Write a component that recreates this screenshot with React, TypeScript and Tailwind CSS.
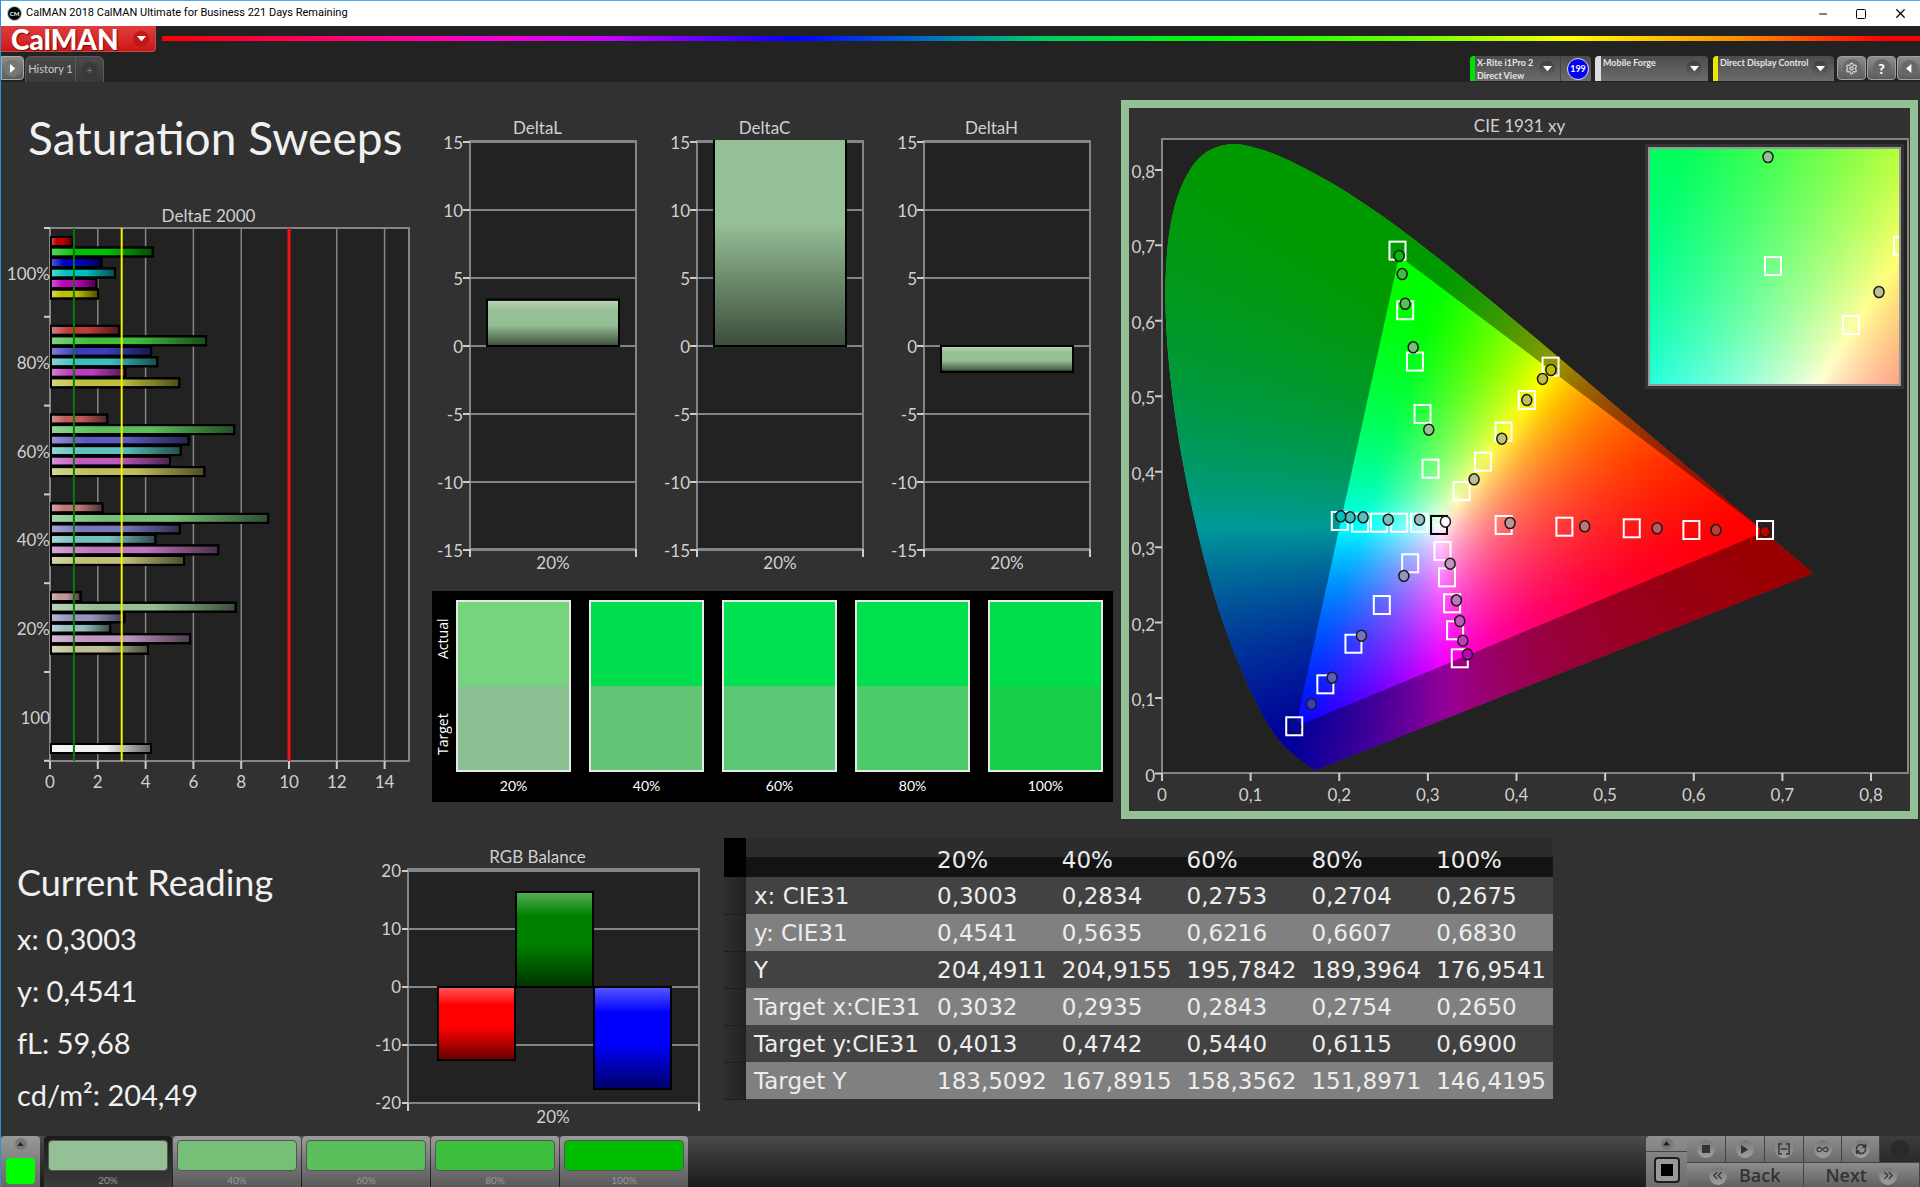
import { ReactNode } from "react";
import { Minus, Square, X, Settings, RefreshCw, Infinity as InfinityIcon, ChevronsLeft, ChevronsRight } from "lucide-react";

const LEVELS = ["20%", "40%", "60%", "80%", "100%"];
const PATCHES = ["#95bf95", "#76bf76", "#5abf5a", "#3cbf3c", "#00bf00"];

const COLORS: Record<string, string[]> = {
  red: ["#bf9595", "#bf7676", "#bf5a5a", "#bf3c3c", "#bf0000"],
  green: PATCHES,
  blue: ["#9595bf", "#7676bf", "#5a5abf", "#3c3cbf", "#0000bf"],
  cyan: ["#95bfbf", "#76bfbf", "#5abfbf", "#3cbfbf", "#00bfbf"],
  magenta: ["#bf95bf", "#bf76bf", "#bf5abf", "#bf3cbf", "#bf00bf"],
  yellow: ["#bfbf95", "#bfbf76", "#bfbf5a", "#bfbf3c", "#bfbf00"],
};
const HUES = ["red", "green", "blue", "cyan", "magenta", "yellow"];

// deltaE per saturation level, in the order of HUES
const deltaE = [
  { label: "100%", level: 4, values: [0.95, 4.3, 2.15, 2.72, 1.94, 2.01] },
  { label: "80%", level: 3, values: [2.9, 6.53, 4.23, 4.49, 3.15, 5.41] },
  { label: "60%", level: 2, values: [2.4, 7.71, 5.8, 5.47, 5.02, 6.46] },
  { label: "40%", level: 1, values: [2.2, 9.13, 5.43, 4.41, 7.04, 5.61] },
  { label: "20%", level: 0, values: [1.28, 7.77, 3.11, 2.52, 5.86, 4.1] },
];

const swatches = [
  { actual: "bg-[#76d47e]", target: "bg-[#8ac092]" },
  { actual: "bg-[#00de4f]", target: "bg-[#63c476]" },
  { actual: "bg-[#00e050]", target: "bg-[#5bc875]" },
  { actual: "bg-[#00e04f]", target: "bg-[#4bcb6c]" },
  { actual: "bg-[#00dc4a]", target: "bg-[#18cd4a]" },
];

const tableRows = [
  ["x: CIE31", "0,3003", "0,2834", "0,2753", "0,2704", "0,2675"],
  ["y: CIE31", "0,4541", "0,5635", "0,6216", "0,6607", "0,6830"],
  ["Y", "204,4911", "204,9155", "195,7842", "189,3964", "176,9541"],
  ["Target x:CIE31", "0,3032", "0,2935", "0,2843", "0,2754", "0,2650"],
  ["Target y:CIE31", "0,4013", "0,4742", "0,5440", "0,6115", "0,6900"],
  ["Target Y", "183,5092", "167,8915", "158,3562", "151,8971", "146,4195"],
];

// spectral locus, 380nm - 700nm
const LOCUS = [
  [0.1741, 0.005], [0.1714, 0.0051], [0.1644, 0.0109],
  [0.1566, 0.0177], [0.144, 0.0297], [0.1355, 0.0399], [0.1241, 0.0578], [0.1096, 0.0868],
  [0.0913, 0.1327], [0.0687, 0.2007], [0.0454, 0.295], [0.0235, 0.4127], [0.0082, 0.5384],
  [0.0039, 0.6548], [0.0139, 0.7502], [0.0389, 0.812], [0.0743, 0.8338], [0.1142, 0.8262],
  [0.1547, 0.8059], [0.1929, 0.7816], [0.2296, 0.7543], [0.2658, 0.7243], [0.3016, 0.6923],
  [0.3373, 0.6589], [0.3731, 0.6245], [0.4087, 0.5896], [0.4441, 0.5547], [0.4788, 0.5202],
  [0.5125, 0.4866], [0.5448, 0.4544], [0.5752, 0.4242], [0.6029, 0.3965], [0.627, 0.3725],
  [0.6658, 0.334], [0.6915, 0.3083], [0.7079, 0.292], [0.7347, 0.2653],
];

const targets = [
  [0.2657, 0.693], [0.2744, 0.614], [0.2854, 0.546], [0.294, 0.4765], [0.303, 0.404],
  [0.4384, 0.5392], [0.4116, 0.495], [0.3853, 0.453], [0.3622, 0.4133], [0.338, 0.3744],
  [0.2006, 0.3347], [0.2235, 0.3324], [0.2447, 0.3324], [0.2676, 0.3324], [0.2902, 0.3324],
  [0.3855, 0.3294], [0.454, 0.3271], [0.53, 0.325], [0.5973, 0.3227], [0.6804, 0.3227],
  [0.3165, 0.2949], [0.3216, 0.26], [0.3273, 0.2256], [0.3307, 0.1898], [0.336, 0.1527],
  [0.28, 0.2786], [0.248, 0.2233], [0.216, 0.172], [0.1843, 0.1182], [0.1492, 0.0626],
];

// measured points, 20% first
const measured: Record<string, number[][]> = {
  green: [[0.301, 0.4557], [0.2834, 0.5648], [0.2744, 0.6226], [0.271, 0.662], [0.2676, 0.6859]],
  yellow: [[0.3521, 0.3899], [0.3834, 0.4437], [0.4116, 0.495], [0.4293, 0.5229], [0.4388, 0.5348]],
  cyan: [[0.2906, 0.3364], [0.2552, 0.3364], [0.2269, 0.3396], [0.2122, 0.3396], [0.2017, 0.3409]],
  red: [[0.3927, 0.332], [0.4769, 0.3276], [0.5586, 0.325], [0.625, 0.3227], [0.6804, 0.3205]],
  magenta: [[0.3251, 0.2781], [0.3322, 0.2296], [0.336, 0.2021], [0.3394, 0.176], [0.3447, 0.158]],
  blue: [[0.2729, 0.2618], [0.225, 0.1826], [0.1919, 0.127], [0.1685, 0.0921], [0.1508, 0.062]],
};

function xyToRgb(x: number, y: number) {
  const X = x / y;
  const Z = (1 - x - y) / y;
  const lin = [
    3.2406 * X - 1.5372 - 0.4986 * Z,
    -0.9689 * X + 1.8758 + 0.0415 * Z,
    0.0557 * X - 0.204 + 1.057 * Z,
  ].map((c) => Math.max(0, c));
  const max = Math.max(...lin);
  const [r, g, b] = lin.map((c) => Math.round((255 * c) / max));
  return `rgb(${r},${g},${b})`;
}

// closed curve through all points, with a straight last edge
function smoothPath(points: number[][]) {
  let d = `M${points[0][0]} ${points[0][1]}`;
  for (let i = 0; i < points.length - 1; i++) {
    const p0 = points[Math.max(0, i - 1)];
    const p1 = points[i];
    const p2 = points[i + 1];
    const p3 = points[Math.min(points.length - 1, i + 2)];
    const c1 = [p1[0] + (p2[0] - p0[0]) / 6, p1[1] + (p2[1] - p0[1]) / 6];
    const c2 = [p2[0] - (p3[0] - p1[0]) / 6, p2[1] - (p3[1] - p1[1]) / 6];
    d += `C${[...c1, ...c2, ...p2].map((n) => n.toFixed(1)).join(" ")}`;
  }
  return d + "Z";
}

interface ColorFieldType {
  id: string;
  left: number;
  top: number;
  width: number;
  height: number;
  x0: number;
  x1: number;
  y0: number;
  y1: number;
}

// chromaticity background, drawn as thin strips with a horizontal gradient each
function ColorField({ id, left, top, width, height, x0, x1, y0, y1 }: ColorFieldType) {
  const step = 3;
  const count = Math.ceil(height / step);
  const stops = Array.from({ length: 41 }, (_, i) => i / 40);
  return (
    <g shapeRendering="crispEdges">
      {Array.from({ length: count }, (_, i) => {
        const y = y1 - ((i + 0.5) / count) * (y1 - y0);
        return (
          <g key={i}>
            <linearGradient id={`${id}${i}`}>
              {stops.map((s) => (
                <stop key={s} offset={s} stopColor={xyToRgb(x0 + s * (x1 - x0), y)} />
              ))}
            </linearGradient>
            <rect x={left} y={top + i * step} width={width} height={step} fill={`url(#${id}${i})`} />
          </g>
        );
      })}
    </g>
  );
}

function ChartTitle({ children }: { children: ReactNode }) {
  return <h2 className="pt-0.5 text-center text-[17px] leading-[22px] text-[#d0d0d0]">{children}</h2>;
}

function BarShade({ id, vertical }: { id: string; vertical?: boolean }) {
  return (
    <linearGradient id={id} x1="0" y1="0" x2={vertical ? "0" : "1"} y2={vertical ? "1" : "0"}>
      <stop offset="0" stopColor="#fff" stopOpacity="0.35" />
      <stop offset="0.25" stopColor="#fff" stopOpacity="0" />
      <stop offset="0.55" stopColor="#000" stopOpacity="0" />
      <stop offset="1" stopColor="#000" stopOpacity="0.6" />
    </linearGradient>
  );
}

function DeltaEChart() {
  const left = 49;
  const unit = 23.9;
  const band = 88.8;
  return (
    <svg viewBox="0 0 431 574" className="block w-full overflow-visible" fontSize="17" fill="#d0d0d0">
      <defs>
        <BarShade id="shadeH" />
      </defs>
      <rect x={left} y="1" width="359" height="533" fill="#222" />
      {[2, 4, 6, 8, 10, 12, 14].map((v) => (
        <line key={v} x1={left + v * unit} x2={left + v * unit} y1="1" y2="534" stroke="#858585" strokeWidth="1.5" />
      ))}
      <rect x={left} y="1" width="359" height="533" fill="none" stroke="#858585" strokeWidth="2" />
      {[0, 2, 4, 6, 8, 10, 12, 14].map((v) => (
        <g key={v}>
          <line x1={left + v * unit} x2={left + v * unit} y1="534" y2="542" stroke="#ccc" strokeWidth="2" />
          <text x={left + v * unit} y="561" textAnchor="middle">{v}</text>
        </g>
      ))}
      {[0, 1, 2, 3, 4, 5, 6].map((i) => (
        <line key={i} x1="43" x2={left} y1={1 + i * band} y2={1 + i * band} stroke="#ccc" strokeWidth="2" />
      ))}
      {deltaE.map((group, g) => (
        <g key={group.label}>
          <text x="49" y={53 + g * band} textAnchor="end">{group.label}</text>
          {group.values.map((v, i) => {
            const box = { x: left + 1, y: 10 + g * band + i * 10.5, width: v * unit - 1, height: 9 };
            return (
              <g key={i} stroke="#000" strokeWidth="2">
                <rect {...box} fill={COLORS[HUES[i]][group.level]} />
                <rect {...box} fill="url(#shadeH)" />
              </g>
            );
          })}
        </g>
      ))}
      <text x="49" y={53 + 5 * band} textAnchor="end">100</text>
      <g stroke="#000" strokeWidth="2">
        <rect x={left + 1} y="517" width="100" height="9" fill="#f2f2f2" />
        <rect x={left + 1} y="517" width="100" height="9" fill="url(#shadeH)" />
      </g>
      <line x1={left + unit} x2={left + unit} y1="1" y2="534" stroke="#0a7a0a" strokeWidth="2" />
      <line x1={left + 3 * unit} x2={left + 3 * unit} y1="1" y2="534" stroke="#f0f000" strokeWidth="2" />
      <line x1={left + 10 * unit} x2={left + 10 * unit} y1="1" y2="534" stroke="#f01414" strokeWidth="3" />
    </svg>
  );
}

function DeltaChart({ title, value }: { title: string; value: number }) {
  const zero = 207;
  const unit = 13.6;
  const top = Math.max(2, zero - Math.max(0, value) * unit);
  const bottom = value > 0 ? zero : zero - value * unit;
  const clipped = value > 15;
  const box = { x: 55, y: top, width: 132, height: bottom - top };
  return (
    <div>
      <div className="pr-4">
        <ChartTitle>{title}</ChartTitle>
      </div>
      <svg viewBox="0 0 227 440" className="block w-full overflow-visible" fontSize="17" fill="#d0d0d0">
        <rect x="38" y="2" width="166" height="408" fill="#222" stroke="#858585" strokeWidth="2" />
        {[15, 10, 5, 0, -5, -10, -15].map((v) => (
          <g key={v}>
            <line x1="38" x2="204" y1={zero - v * unit} y2={zero - v * unit} stroke="#858585" strokeWidth="2" />
            <line x1="31" x2="38" y1={zero - v * unit} y2={zero - v * unit} stroke="#ccc" strokeWidth="2" />
            <text x="31" y={zero - v * unit + 7} textAnchor="end">{v}</text>
          </g>
        ))}
        <path d="M38 410v8M204 410v8" stroke="#ccc" strokeWidth="2" />
        <rect {...box} fill="#95bf95" stroke="#000" strokeWidth="2" />
        <rect {...box} fill={clipped ? "url(#shadeTall)" : "url(#shadeV)"} stroke="#000" strokeWidth="2" />
        {clipped && <rect x="56" y="1" width="130" height="3" fill="#95bf95" />}
        <text x="121" y="430" textAnchor="middle">20%</text>
      </svg>
    </div>
  );
}

function SwatchPanel() {
  return (
    <div className="mt-3 grid grid-cols-[24px_1fr] bg-black pb-1.5 pt-[9px] pr-2.5 text-[14px] text-white">
      <div className="flex flex-col pr-1 font-['Open_Sans',sans-serif]">
        <span className="flex h-[77px] rotate-180 items-center justify-center [writing-mode:vertical-rl]">Actual</span>
        <span className="flex h-[114px] rotate-180 items-center justify-center [writing-mode:vertical-rl]">Target</span>
      </div>
      <div className="grid grid-cols-5 gap-[18px]">
        {swatches.map((s, i) => (
          <div key={i}>
            <div className="border-2 border-[#e8e8e8]">
              <div className={`h-[84px] ${s.actual}`} />
              <div className={`h-[84px] ${s.target}`} />
            </div>
            <div className="pt-1 text-center leading-5">{LEVELS[i]}</div>
          </div>
        ))}
      </div>
    </div>
  );
}

function CieChart() {
  const px = (x: number) => 33 + x * 886.3;
  const py = (y: number) => 636.5 - y * 754.5;
  const locus = smoothPath(LOCUS.map(([x, y]) => [px(x), py(y)]));
  const gamut = "M" + [[0.2676, 0.6859], [0.6804, 0.3205], [0.1508, 0.062]].map(([x, y]) => `${px(x)} ${py(y)}`).join("L") + "Z";
  const ticks = [0, 1, 2, 3, 4, 5, 6, 7, 8];
  return (
    <svg viewBox="0 0 781 674" className="block w-full" fontSize="17" fill="#d0d0d0">
      <defs>
        <clipPath id="locusClip">
          <path d={locus} />
        </clipPath>
        <clipPath id="insetClip">
          <rect x="521" y="12" width="249" height="235" />
        </clipPath>
      </defs>
      <rect x="33" y="2" width="746" height="634" fill="#222" stroke="#858585" strokeWidth="2" />
      {ticks.map((t) => (
        <g key={t}>
          <path d={`M${px(t / 10)} 636v8M26 ${py(t / 10)}h7`} stroke="#ccc" strokeWidth="2" />
          <text x={px(t / 10)} y="664" textAnchor="middle">{t ? `0,${t}` : "0"}</text>
          <text x="26" y={py(t / 10) + 8} textAnchor="end">{t ? `0,${t}` : "0"}</text>
        </g>
      ))}
      <g clipPath="url(#locusClip)">
        <ColorField id="cie" left={px(0)} top={py(0.84)} width={0.74 * 886.3} height={0.84 * 754.5} x0={0} x1={0.74} y0={0} y1={0.84} />
        <path d={`${locus}${gamut}`} fillRule="evenodd" fill="#000" fillOpacity="0.4" />
      </g>
      {targets.map(([x, y]) => (
        <rect key={`${x}-${y}`} x={px(x) - 8} y={py(y) - 9} width="16" height="18" fill="none" stroke="#fff" strokeWidth="2" />
      ))}
      <rect x={px(0.3126) - 8} y={py(0.3294) - 9} width="16" height="18" fill="none" stroke="#000" strokeWidth="2" />
      {Object.keys(measured).map((hue) =>
        measured[hue].map(([x, y], i) => (
          <ellipse key={`${hue}${i}`} cx={px(x)} cy={py(y)} rx="5" ry="5.5" fill={COLORS[hue][i]} stroke="#1a1a1a" strokeWidth="1.5" />
        ))
      )}
      <ellipse cx={px(0.3198)} cy={py(0.3337)} rx="5" ry="5.5" fill="#fff" stroke="#1a1a1a" strokeWidth="1.5" />

      <rect x="516" y="7" width="259" height="245" fill="#333" />
      <g clipPath="url(#insetClip)">
        <ColorField id="inset" left={520} top={11} width={251} height={238} x0={0.2462} x1={0.3602} y0={0.3443} y1={0.4583} />
        {[[644, 129], [722, 188], [773, 109]].map(([x, y]) => (
          <rect key={x} x={x - 8} y={y - 9} width="16" height="18" fill="none" stroke="#fff" strokeWidth="2" />
        ))}
        <ellipse cx="639" cy="20" rx="5" ry="5.5" fill="#95bf95" stroke="#1a1a1a" strokeWidth="1.5" />
        <ellipse cx="750" cy="155" rx="5" ry="5.5" fill="#bfbf95" stroke="#1a1a1a" strokeWidth="1.5" />
      </g>
      <rect x="520" y="11" width="251" height="237" fill="none" stroke="#999" strokeWidth="2" />
    </svg>
  );
}

function RgbChart() {
  const bars = [
    { x: 67, y: 119, height: 73, fill: "#ff0000" },
    { x: 145, y: 24, height: 95, fill: "#008000" },
    { x: 223, y: 119, height: 102, fill: "#0000ff" },
  ];
  return (
    <svg viewBox="0 0 353 268" className="block w-full overflow-visible" fontSize="17" fill="#d0d0d0">
      <rect x="37" y="1" width="291" height="234" fill="#222" stroke="#858585" strokeWidth="2" />
      {[20, 10, 0, -10, -20].map((v) => (
        <g key={v}>
          <line x1="37" x2="328" y1={119 - v * 5.8} y2={119 - v * 5.8} stroke="#858585" strokeWidth="2" />
          <line x1="31" x2="37" y1={119 - v * 5.8} y2={119 - v * 5.8} stroke="#ccc" strokeWidth="2" />
          <text x="30" y={125 - v * 5.8} textAnchor="end">{v}</text>
        </g>
      ))}
      <path d="M37 235v8M328 235v8" stroke="#ccc" strokeWidth="2" />
      {bars.map((b) => (
        <g key={b.x} stroke="#000" strokeWidth="2">
          <rect x={b.x} y={b.y} width="77" height={b.height} fill={b.fill} />
          <rect x={b.x} y={b.y} width="77" height={b.height} fill="url(#shadeV)" />
        </g>
      ))}
      <text x="182" y="255" textAnchor="middle">20%</text>
    </svg>
  );
}

function ResultTable() {
  return (
    <table className="w-full table-fixed border-collapse self-start text-left font-['DejaVu_Sans',sans-serif] text-[23px] leading-6 text-[#ededed]">
      <colgroup>
        <col className="w-[22px]" />
        <col className="w-[183px]" />
        <col />
        <col />
        <col />
        <col />
        <col />
      </colgroup>
      <thead>
        <tr className="h-[39px] bg-linear-to-b from-[#2c2c2c] from-50% to-[#131313] to-50%">
          <th className="bg-black" />
          <th />
          {LEVELS.map((l) => (
            <th key={l} className="pl-2 pt-1 font-normal">{l}</th>
          ))}
        </tr>
      </thead>
      <tbody>
        {tableRows.map((row, i) => (
          <tr key={row[0]} className={i % 2 ? "h-[37px] bg-[#808080]" : "h-[37px] bg-[#424242]"}>
            <td className="border-b border-[#1c1c1c] bg-linear-to-r from-[#2e2e2e] to-[#222]" />
            {row.map((cell) => (
              <td key={cell} className="whitespace-nowrap pl-2">{cell}</td>
            ))}
          </tr>
        ))}
      </tbody>
    </table>
  );
}

function DropButton({ label }: { label: string }) {
  return (
    <button aria-label={label} className="flex size-4 shrink-0 items-center justify-center rounded-full bg-linear-to-b from-[#3e3e3e] to-[#666]">
      <svg viewBox="0 0 10 6" className="w-[9px]">
        <path d="M0 0h10L5 6z" fill="#fff" />
      </svg>
    </button>
  );
}

function TopBar() {
  const tool = "flex h-6 w-[29px] shrink-0 items-center justify-center rounded border border-[#a0a0a0] bg-linear-to-b from-[#8c8c8c] to-[#5c5c5c]";
  const device = "flex h-[25px] shrink-0 rounded-t bg-linear-to-b from-[#4c4c4c] to-[#6c6c6c] overflow-hidden text-[9px] font-bold leading-[13px] text-[#e4e4e4]";
  return (
    <div className="bg-[#222]">
      <div className="flex h-[30px] items-start">
        <button className="flex h-[26px] w-[155px] shrink-0 items-center justify-between rounded-br border-b border-r border-[#b85050] bg-linear-to-b from-[#e03c3c] to-[#cc1414] pl-[10px] pr-1.5">
          <span className="text-[28px] font-black leading-6 text-white [text-shadow:1px_1px_1px_#700]">CalMAN</span>
          <span className="flex size-4 items-center justify-center rounded-full bg-[#c01818]">
            <svg viewBox="0 0 10 6" className="w-[9px]">
              <path d="M0 0h10L5 6z" fill="#fff" />
            </svg>
          </span>
        </button>
        <div className="ml-1.5 mt-[10px] h-[5px] flex-1 bg-[linear-gradient(to_right,#f00,#f0c_18%,#c0f_25%,#00f_36%,#06c_43%,#0c6_50%,#0f0_60%,#7f0_72%,#ff0_80%,#f80_90%,#f00_98%)]" />
      </div>
      <div className="flex h-[26px] items-start">
        <button aria-label="Show panel" className="flex h-6 w-[23px] items-center justify-center rounded-r border border-[#aaa] bg-linear-to-b from-[#8c8c8c] to-[#5c5c5c]">
          <span className="flex size-[17px] items-center justify-center rounded-full bg-[#777]">
            <svg viewBox="0 0 6 10" className="h-[9px]">
              <path d="M0 0v10l6-5z" fill="#fff" />
            </svg>
          </span>
        </button>
        <div className="ml-px flex h-[26px] rounded-t-md border border-b-0 border-[#5a5a5a] bg-linear-to-b from-[#4a4a4a] to-[#383838]">
          <button className="w-[50px] border-r border-[#5a5a5a] text-[11px] text-[#ccc]">History 1</button>
          <button aria-label="Add history" className="flex w-[27px] items-center justify-center">
            <span className="flex size-4 items-center justify-center rounded-full bg-[#3a3a3a] text-[11px] leading-4 text-[#777]">+</span>
          </button>
        </div>
        <div className="ml-auto flex items-start">
          <div className={`${device} w-[121px]`}>
            <span className="w-[5px] bg-[#00e000]" />
            <span className="w-[64px] shrink-0 whitespace-nowrap pl-0.5">X-Rite i1Pro 2<br />Direct View</span>
            <span className="flex w-[22px] items-center border-r border-[#444]"><DropButton label="Meter menu" /></span>
            <span className="flex flex-1 items-center justify-center pl-1">
              <span className="flex size-[22px] items-center justify-center rounded-full border border-[#ddd] bg-[#00f] text-white">199</span>
            </span>
          </div>
          <div className={`${device} ml-1 w-[113px] justify-between pr-1.5`}>
            <span className="flex">
              <span className="w-[6px] bg-[#ddd]" />
              <span className="pl-0.5">Mobile Forge</span>
            </span>
            <span className="flex items-center"><DropButton label="Source menu" /></span>
          </div>
          <div className={`${device} ml-[5px] w-[121px] justify-between pr-1.5`}>
            <span className="flex">
              <span className="w-[5px] bg-[#e8e800]" />
              <span className="whitespace-nowrap pl-0.5">Direct Display Control</span>
            </span>
            <span className="flex items-center"><DropButton label="Display menu" /></span>
          </div>
          <button aria-label="Settings" className={`${tool} ml-[3px]`}>
            <span className="flex size-[18px] items-center justify-center rounded-full bg-[#686868]"><Settings size={13} color="#ddd" /></span>
          </button>
          <button aria-label="Help" className={`${tool} ml-px`}>
            <span className="flex size-[18px] items-center justify-center rounded-full bg-[#686868] text-[14px] font-black text-white">?</span>
          </button>
          <button aria-label="Collapse" className="ml-px flex h-6 w-[23px] items-center justify-center rounded-l border border-r-0 border-[#a0a0a0] bg-linear-to-b from-[#8c8c8c] to-[#5c5c5c]">
            <span className="flex size-[17px] items-center justify-center rounded-full bg-[#686868]">
              <svg viewBox="0 0 6 10" className="h-[9px]">
                <path d="M6 0v10L0 5z" fill="#fff" />
              </svg>
            </span>
          </button>
        </div>
      </div>
    </div>
  );
}

function RoundIcon({ children }: { children?: ReactNode }) {
  return <span className="flex size-[18px] items-center justify-center rounded-full bg-linear-to-b from-[#777] to-[#a0a0a0] text-[#333]">{children}</span>;
}

function BottomBar() {
  const key = "flex h-[26px] items-center justify-center border-r border-[#444] bg-linear-to-b from-[#8e8e8e] to-[#6c6c6c]";
  const nav = "flex h-[26px] flex-1 items-center justify-center gap-3 border-r border-t border-[#444] bg-linear-to-b from-[#8e8e8e] to-[#5e5e5e] font-['Open_Sans',sans-serif] text-[18px] font-semibold text-[#333]";
  return (
    <div className="flex h-[52px] shrink-0 items-stretch bg-linear-to-b from-[#4a4a4a] to-[#1a1a1a]">
      <div className="flex w-[39px] flex-col items-center justify-between rounded-t bg-linear-to-b from-[#999] to-[#666] pb-1 pt-0.5">
        <button aria-label="Expand" className="flex size-3 items-center justify-center rounded-full bg-[#777]">
          <svg viewBox="0 0 8 5" className="w-[7px]"><path d="M0 5h8L4 0z" fill="#222" /></svg>
        </button>
        <span className="h-[26px] w-[29px] rounded-sm bg-[#00ff00]" />
      </div>
      <div className="ml-1 flex gap-px">
        {PATCHES.map((c, i) => (
          <button
            key={c}
            className={
              i === 0
                ? "w-32 rounded-t border-t-2 border-[#1c1c1c] bg-linear-to-b from-[#1c1c1c] to-[#3c3c3c] px-1 text-[10px] leading-[14px] text-[#999]"
                : "w-32 rounded-t border-t-2 border-[#999] bg-linear-to-b from-[#999] to-[#585858] px-1 text-[10px] leading-[14px] text-[#999]"
            }
          >
            <span className="mb-0.5 block h-[31px] rounded-sm border border-[#555]" style={{ backgroundColor: c }} />
            {LEVELS[i]}
          </button>
        ))}
      </div>
      <div className="ml-auto flex">
        <div className="flex w-[41px] flex-col rounded-tl bg-linear-to-b from-[#8e8e8e] to-[#6c6c6c]">
          <button aria-label="Expand" className="flex h-4 items-center justify-center border-b border-[#444]">
            <span className="flex size-3 items-center justify-center rounded-full bg-[#777]">
              <svg viewBox="0 0 8 5" className="w-[7px]"><path d="M0 5h8L4 0z" fill="#222" /></svg>
            </span>
          </button>
          <button aria-label="Pattern window" className="flex flex-1 items-center justify-center">
            <span className="flex size-[26px] items-center justify-center rounded border-2 border-[#1c1c1c] bg-[#999]">
              <span className="size-3 bg-black" />
            </span>
          </button>
        </div>
        <div className="flex w-[233px] flex-col">
          <div className="flex">
            <button aria-label="Stop" className={`${key} w-[39px]`}>
              <RoundIcon><span className="size-2 bg-[#333]" /></RoundIcon>
            </button>
            <button aria-label="Play" className={`${key} w-[39px]`}>
              <RoundIcon><svg viewBox="0 0 8 10" className="h-[9px]"><path d="M0 0v10l8-5z" fill="#333" /></svg></RoundIcon>
            </button>
            <button aria-label="Read series" className={`${key} w-[39px]`}>
              <RoundIcon>
                <svg viewBox="0 0 12 12" className="size-3" fill="none" stroke="#333" strokeWidth="1.5"><path d="M4 1H1v10h3M8 1h3v10H8M3 6h6" /></svg>
              </RoundIcon>
            </button>
            <button aria-label="Continuous" className={`${key} w-[38px]`}>
              <RoundIcon><InfinityIcon size={13} /></RoundIcon>
            </button>
            <button aria-label="Refresh" className={`${key} w-[38px]`}>
              <RoundIcon><RefreshCw size={12} strokeWidth={3} /></RoundIcon>
            </button>
            <span className="flex h-[26px] flex-1 items-center justify-center bg-linear-to-b from-[#3c3c3c] to-[#2a2a2a]">
              <span className="size-[18px] rounded-full bg-[#2a2a2a]" />
            </span>
          </div>
          <div className="flex">
            <button className={nav}>
              <RoundIcon><ChevronsLeft size={15} /></RoundIcon>
              Back
            </button>
            <button className={nav}>
              Next
              <RoundIcon><ChevronsRight size={15} /></RoundIcon>
            </button>
          </div>
        </div>
      </div>
    </div>
  );
}

export default function App() {
  return (
    <div className="flex min-h-screen flex-col border-l border-[#2f8fd0] bg-[#313131] font-[Lato,sans-serif] text-[#f0f0f0]">
      <svg width="0" height="0" className="absolute">
        <defs>
          <BarShade id="shadeV" vertical />
          <linearGradient id="shadeTall" x1="0" y1="0" x2="0" y2="1">
            <stop offset="0.4" stopColor="#000" stopOpacity="0" />
            <stop offset="1" stopColor="#000" stopOpacity="0.6" />
          </linearGradient>
        </defs>
      </svg>
      <header>
        <div className="flex h-[26px] items-center border-t border-[#4fa8e8] bg-white pl-[7px] text-black">
          <span className="flex size-[13px] items-center justify-center rounded-full bg-black text-[6px] font-bold text-white ring-1 ring-[#9cc]">CM</span>
          <span className="pl-[5px] font-[Roboto,sans-serif] text-[11px]">CalMAN 2018 CalMAN Ultimate for Business 221 Days Remaining</span>
          <div className="ml-auto flex gap-[26px] pr-3">
            <button aria-label="Minimize"><Minus size={12} strokeWidth={2} /></button>
            <button aria-label="Maximize"><Square size={12} strokeWidth={2} /></button>
            <button aria-label="Close"><X size={15} strokeWidth={2} /></button>
          </div>
        </div>
        <TopBar />
      </header>

      <main className="flex-1">
        <div className="grid grid-cols-[431fr_681fr_807fr]">
          <section className="pt-6">
            <h1 className="mb-[33px] pl-[27px] text-[46px] leading-[64px] whitespace-nowrap">Saturation Sweeps</h1>
            <div className="pr-4">
              <ChartTitle>DeltaE 2000</ChartTitle>
            </div>
            <DeltaEChart />
          </section>
          <section className="pt-[33px]">
            <div className="grid grid-cols-3">
              <DeltaChart title="DeltaL" value={3.4} />
              <DeltaChart title="DeltaC" value={18} />
              <DeltaChart title="DeltaH" value={-1.9} />
            </div>
            <SwatchPanel />
          </section>
          <section className="pl-2 pr-0.5 pt-[18px]">
            <div className="border-8 border-[#95bf95] pt-[5px]">
              <ChartTitle>CIE 1931 xy</ChartTitle>
              <CieChart />
            </div>
          </section>
        </div>

        <div className="mt-[19px] grid grid-cols-[370fr_353fr_829fr_367fr]">
          <section className="pl-4 pt-[18px]">
            <h2 className="text-[36px] leading-[52px]">Current Reading</h2>
            <div className="pt-[5px] text-[29px] leading-[52px]">
              <p>x: 0,3003</p>
              <p>y: 0,4541</p>
              <p>fL: 59,68</p>
              <p>cd/m²: 204,49</p>
            </div>
          </section>
          <section className="pt-1.5">
            <div className="pr-5">
              <ChartTitle>RGB Balance</ChartTitle>
            </div>
            <RgbChart />
          </section>
          <ResultTable />
        </div>
      </main>

      <BottomBar />
    </div>
  );
}
